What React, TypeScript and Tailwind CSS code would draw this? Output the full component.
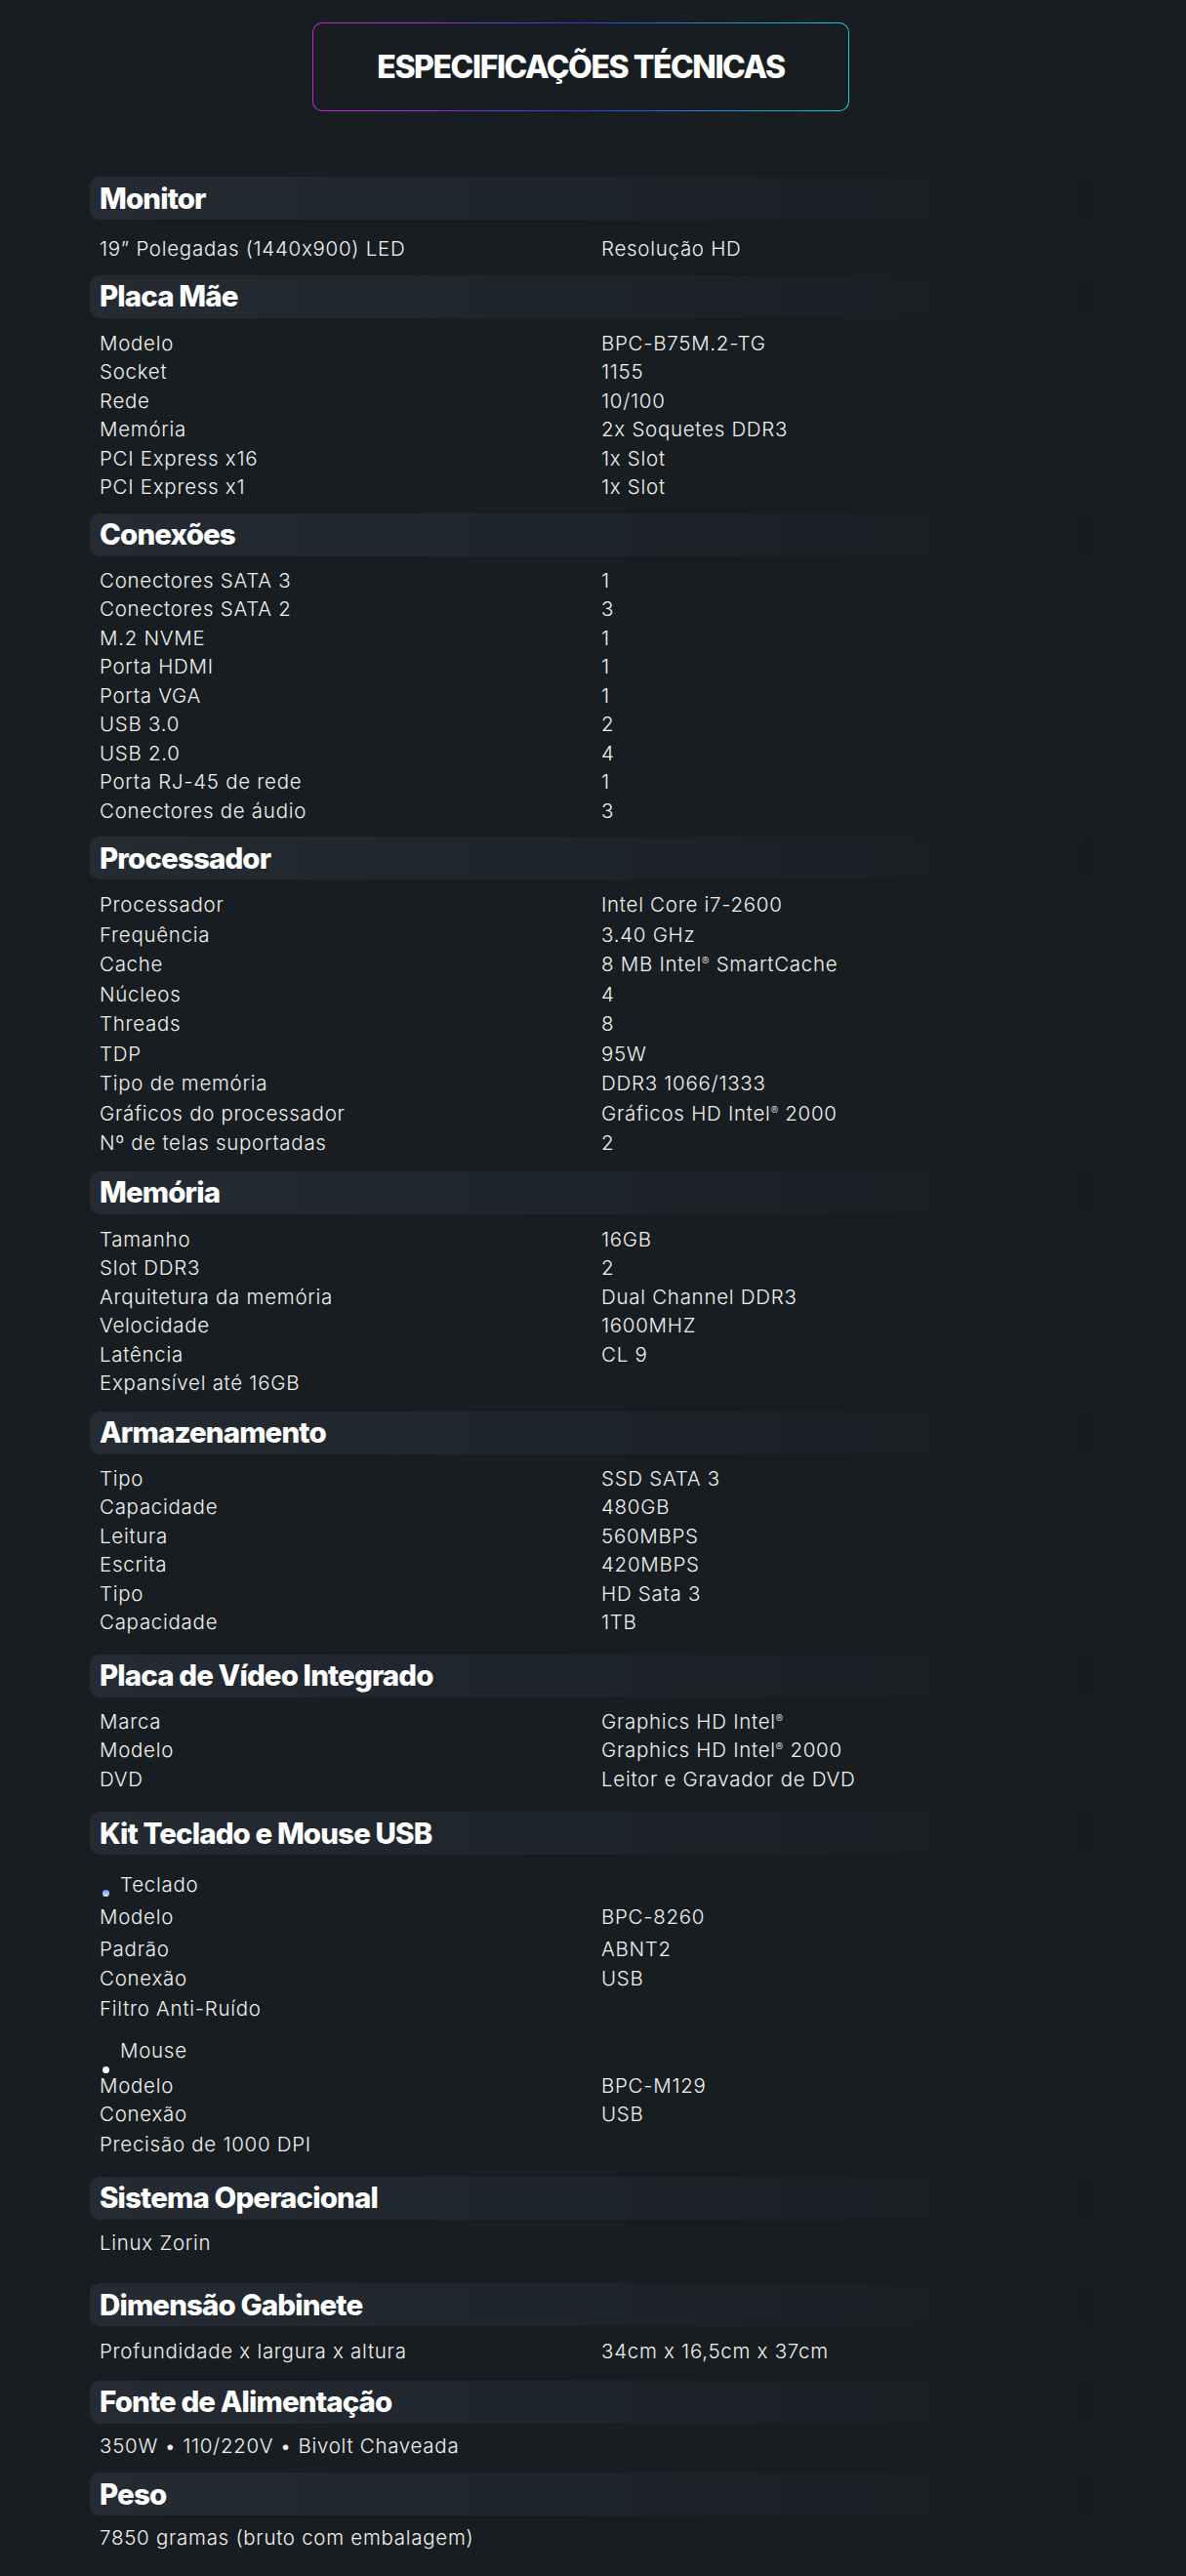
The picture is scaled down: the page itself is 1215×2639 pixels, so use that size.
import type { ReactNode } from 'react'

type Spec = [ReactNode, ReactNode?]

const R = () => <span className="relative -top-[6px] text-[11px] leading-none">®</span>

const sections: { title: string; pt: string; pb: string; lead?: string; rows: Spec[] }[] = [
  { title: 'Monitor', pt: 'pt-[15px]', pb: 'pb-[12px]', rows: [['19” Polegadas (1440x900) LED', 'Resolução HD']] },
  {
    title: 'Placa Mãe',
    pt: 'pt-[11px]',
    pb: 'pb-[12px]',
    rows: [
      ['Modelo', 'BPC-B75M.2-TG'],
      ['Socket', '1155'],
      ['Rede', '10/100'],
      ['Memória', '2x Soquetes DDR3'],
      ['PCI Express x16', '1x Slot'],
      ['PCI Express x1', '1x Slot'],
    ],
  },
  {
    title: 'Conexões',
    pt: 'pt-[10px]',
    pb: 'pb-[12px]',
    rows: [
      ['Conectores SATA 3', '1'],
      ['Conectores SATA 2', '3'],
      ['M.2 NVME', '1'],
      ['Porta HDMI', '1'],
      ['Porta VGA', '1'],
      ['USB 3.0', '2'],
      ['USB 2.0', '4'],
      ['Porta RJ-45 de rede', '1'],
      ['Conectores de áudio', '3'],
    ],
  },
  {
    title: 'Processador',
    pt: 'pt-[11px]',
    pb: 'pb-[13px]',
    lead: 'leading-[30.5px]',
    rows: [
      ['Processador', 'Intel Core i7-2600'],
      ['Frequência', '3.40 GHz'],
      ['Cache', <>8 MB Intel<R /> SmartCache</>],
      ['Núcleos', '4'],
      ['Threads', '8'],
      ['TDP', '95W'],
      ['Tipo de memória', 'DDR3 1066/1333'],
      ['Gráficos do processador', <>Gráficos HD Intel<R /> 2000</>],
      ['Nº de telas suportadas', '2'],
    ],
  },
  {
    title: 'Memória',
    pt: 'pt-[11px]',
    pb: 'pb-[14px]',
    rows: [
      ['Tamanho', '16GB'],
      ['Slot DDR3', '2'],
      ['Arquitetura da memória', 'Dual Channel DDR3'],
      ['Velocidade', '1600MHZ'],
      ['Latência', 'CL 9'],
      ['Expansível até 16GB'],
    ],
  },
  {
    title: 'Armazenamento',
    pt: 'pt-[10px]',
    pb: 'pb-[18px]',
    rows: [
      ['Tipo', 'SSD SATA 3'],
      ['Capacidade', '480GB'],
      ['Leitura', '560MBPS'],
      ['Escrita', '420MBPS'],
      ['Tipo', 'HD Sata 3'],
      ['Capacidade', '1TB'],
    ],
  },
  {
    title: 'Placa de Vídeo Integrado',
    pt: 'pt-[10px]',
    pb: 'pb-[19px]',
    rows: [
      ['Marca', <>Graphics HD Intel<R /></>],
      ['Modelo', <>Graphics HD Intel<R /> 2000</>],
      ['DVD', 'Leitor e Gravador de DVD'],
    ],
  },
]

const tail: { title: string; pt: string; pb: string; rows: Spec[] }[] = [
  { title: 'Sistema Operacional', pt: 'pt-[9px]', pb: 'pb-[27px]', rows: [['Linux Zorin']] },
  { title: 'Dimensão Gabinete', pt: 'pt-[11px]', pb: 'pb-[15px]', rows: [['Profundidade x largura x altura', '34cm x 16,5cm x 37cm']] },
  { title: 'Fonte de Alimentação', pt: 'pt-[8px]', pb: 'pb-[13px]', rows: [['350W • 110/220V • Bivolt Chaveada']] },
  { title: 'Peso', pt: 'pt-[8px]', pb: 'pb-[24px]', rows: [['7850 gramas (bruto com embalagem)']] },
]

function Heading({ children }: { children: ReactNode }) {
  return (
    <h3 className="h-[44px] flex items-center px-[10px] rounded-l-[10px] bg-gradient-to-r from-[#252b32] via-[#1e242b] to-[#171c20] text-white text-[29.5px] font-extrabold tracking-[-0.03em]">
      {children}
    </h3>
  )
}

function Row({ label, value, h }: { label: ReactNode; value?: ReactNode; h?: string }) {
  return (
    <div className={`grid grid-cols-[514px_1fr] ${h ?? ''}`}>
      <span>{label}</span>
      <span>{value}</span>
    </div>
  )
}

function Section({ title, pt, pb, lead, rows }: { title: string; pt: string; pb: string; lead?: string; rows: Spec[] }) {
  return (
    <section>
      <Heading>{title}</Heading>
      <div className={`px-[10px] ${pt} ${pb} ${lead ?? 'leading-[29.5px]'}`}>
        {rows.map((r, i) => (
          <Row key={i} label={r[0]} value={r[1]} />
        ))}
      </div>
    </section>
  )
}

function Kit() {
  return (
    <section>
      <Heading>Kit Teclado e Mouse USB</Heading>
      <div className="px-[10px] pt-[16px] pb-[18px] leading-[29.5px]">
        <div className="relative h-[33px] pl-[21px]">
          <span className="absolute left-[3px] top-[20px] size-[7px] rounded-full bg-gradient-to-b from-[#5c8ff0] to-[#e6eeff]" />
          Teclado
        </div>
        <Row label="Modelo" value="BPC-8260" h="h-[33px]" />
        <Row label="Padrão" value="ABNT2" h="h-[30px]" />
        <Row label="Conexão" value="USB" h="h-[31px]" />
        <Row label="Filtro Anti-Ruído" h="h-[43px]" />
        <div className="relative h-[36px] pl-[21px]">
          <span className="absolute left-[3px] top-[31px] size-[7px] rounded-full bg-white" />
          Mouse
        </div>
        <Row label="Modelo" value="BPC-M129" h="h-[29px]" />
        <Row label="Conexão" value="USB" h="h-[31px]" />
        <Row label="Precisão de 1000 DPI" h="h-[29.5px]" />
      </div>
    </section>
  )
}

export default function App() {
  return (
    <div className="min-h-screen bg-[#171d20] font-['Inter',sans-serif] text-[20.5px] font-light tracking-[0.035em] text-[#f1f1f1]">
      <div className="pt-[23px] pl-[320px]">
        <div className="w-[550px] h-[91px] rounded-[10px] p-px bg-gradient-to-r from-[#c81fd0] via-[#3537d4] to-[#14c9d2]">
          <div className="h-full rounded-[9px] bg-[#171d20] flex items-center justify-center">
            <h2 className="text-white text-[32px] font-extrabold tracking-[-0.045em]">ESPECIFICAÇÕES TÉCNICAS</h2>
          </div>
        </div>
      </div>
      <div className="ml-[92px] w-[1030px] mt-[67px]">
        {sections.map((s) => (
          <Section key={s.title} {...s} />
        ))}
        <Kit />
        {tail.map((s) => (
          <Section key={s.title} {...s} />
        ))}
      </div>
    </div>
  )
}
